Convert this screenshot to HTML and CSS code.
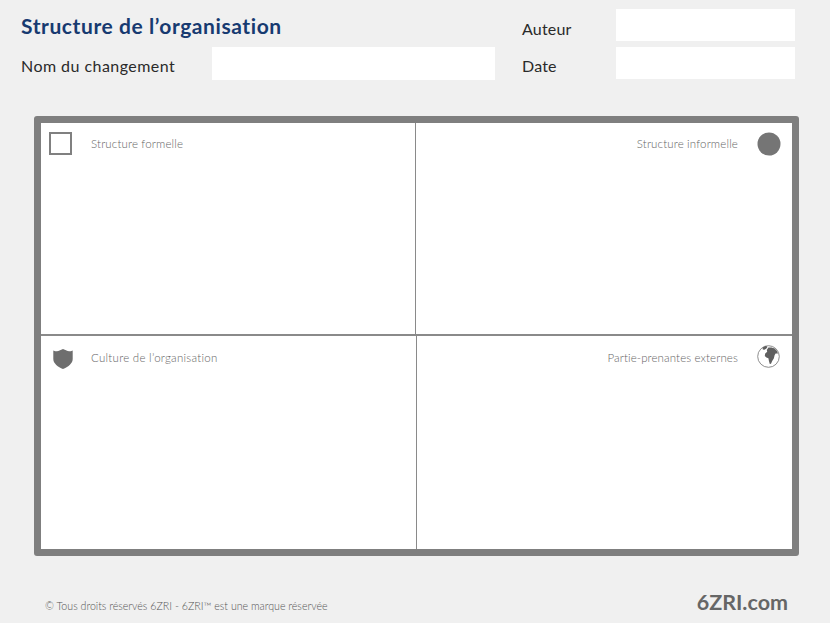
FILE: index.html
```html
<!DOCTYPE html>
<html lang="fr">
<head>
<meta charset="utf-8">
<title>Structure de l’organisation</title>
<link rel="stylesheet" href="styles.css">
</head>
<body>
<header class="head">
  <h1 class="title">Structure de l’organisation</h1>
  <span class="label auteur">Auteur</span>
  <div class="field f-auteur"></div>
  <span class="label nom">Nom du changement</span>
  <div class="field f-nom"></div>
  <span class="label date">Date</span>
  <div class="field f-date"></div>
</header>
<main class="board">
  <section class="row row-top">
    <div class="cell cell-left">
      <svg class="icon" width="23" height="23" viewBox="0 0 23 23"><rect x="1" y="1" width="21" height="21" fill="none" stroke="#808080" stroke-width="2"/></svg>
      <span class="cell-label formelle">Structure formelle</span>
    </div>
    <div class="cell cell-right">
      <span class="cell-label informelle">Structure informelle</span>
      <svg class="icon" width="24" height="24" viewBox="0 0 24 24"><circle cx="12" cy="12" r="11.5" fill="#757575"/></svg>
    </div>
  </section>
  <section class="row row-bottom">
    <div class="cell cell-left">
      <svg class="icon shield" width="20" height="20" viewBox="0 0 20 20"><path d="M0.3 1.5 C3 2.6 5 2.6 6.5 1.6 L10 0 L13.5 1.6 C15 2.6 17 2.6 19.7 1.5 V10 C19.7 14.5 15 18 10 20 C5 18 0.3 14.5 0.3 10 Z" fill="#6e6e6e"/></svg>
      <span class="cell-label culture">Culture de l’organisation</span>
    </div>
    <div class="cell cell-right">
      <span class="cell-label">Partie-prenantes externes</span>
      <svg class="icon globe" width="23" height="23" viewBox="0 0 23 23">
        <circle cx="11.5" cy="11.5" r="10.8" fill="#fff" stroke="#808080" stroke-width="0.9"/>
        <path d="M5.6 2.4 L9 0.8 L10.4 2 L9.4 3.4 L7.4 4.8 L5.8 4.4 Z" fill="#5f5f5f"/>
        <path d="M11.4 2.6 L14.6 2.4 L17.6 3.6 L20 6 L21 8.6 L18.6 8.4 L17.6 10.2 L16.8 13.4 L15.2 16 L14 18.8 L12.8 19 L12 16.2 L11.4 13.2 L9.4 12.6 L7.8 11 L8.2 8.4 L10.2 6.8 L9.8 5 Z" fill="#5f5f5f"/>
      </svg>
    </div>
  </section>
</main>
<footer class="foot">
  <span class="copy">© Tous droits réservés 6ZRI - 6ZRI™ est une marque réservée</span>
  <span class="brand">6ZRI.com</span>
</footer>
</body>
</html>
```
FILE: styles.css
```css
* { box-sizing: border-box; }
html, body { margin: 0; padding: 0; }
body {
  width: 830px;
  height: 623px;
  overflow: hidden;
  background: #f0f0f0;
  font-family: Lato, "Open Sans", sans-serif;
}
.head {
  display: grid;
  grid-template-columns: 191px 283px 27px 94px 179px;
  grid-template-rows: 32px 33px;
  row-gap: 6px;
  padding: 9px 0 0 21px;
  align-items: center;
}
.title {
  grid-column: 1 / 4;
  margin: 0;
  font-size: 21px;
  font-weight: 700;
  color: #173a70;
  letter-spacing: 0.58px;
}
.label { font-size: 16px; color: #2a2a2a; letter-spacing: 0.45px; }
.auteur { grid-column: 4; grid-row: 1; position: relative; top: 3px; letter-spacing: 0.2px; }
.nom { grid-column: 1; grid-row: 2; position: relative; top: 2px; }
.date { grid-column: 4; grid-row: 2; position: relative; top: 2px; letter-spacing: 0.2px; }
.field { background: #fff; height: 100%; }
.f-auteur { grid-column: 5; grid-row: 1; }
.f-nom { grid-column: 2; grid-row: 2; }
.f-date { grid-column: 5; grid-row: 2; height: 32px; align-self: start; }
.board {
  margin: 36px 0 0 34px;
  width: 765px;
  height: 440px;
  border: 7px solid #7f7f7f;
  border-radius: 3px;
  background: #fff;
  display: flex;
  flex-direction: column;
}
.row { display: flex; }
.row-top { height: 213px; border-bottom: 2px solid #8a8a8a; }
.row-bottom { flex: 1; }
.cell { display: flex; align-items: flex-start; }
.cell-left { border-right: 1.5px solid #8a8a8a; }
.row-top .cell-left { width: 375px; }
.row-bottom .cell-left { width: 376px; }
.cell-right { flex: 1; justify-content: flex-end; }
.cell-label {
  font-size: 11.5px;
  font-weight: 300;
  color: #666;
  line-height: 14px;
  letter-spacing: 0.12px;
}
.formelle { letter-spacing: 0.16px; }
.informelle { letter-spacing: 0.16px; }
.culture { letter-spacing: 0.27px; }
.row-top .cell-left { padding: 9px 0 0 8px; }
.row-top .cell-left .cell-label { margin: 5px 0 0 19px; }
.row-top .cell-right { padding: 9px 11px 0 0; }
.row-top .cell-right .cell-label { margin: 5px 19px 0 0; }
.row-bottom .cell-left { padding: 13px 0 0 12px; }
.row-bottom .cell-left .cell-label { margin: 2px 0 0 18px; }
.row-bottom .cell-right { padding: 9px 12px 0 0; }
.row-bottom .cell-right .cell-label { margin: 6px 19px 0 0; }
.foot {
  display: flex;
  justify-content: space-between;
  align-items: center;
  padding: 33px 42px 0 45px;
}
.copy { font-size: 10.65px; font-weight: 300; color: #555; position: relative; top: 3px; }
.brand { font-size: 21.5px; font-weight: 700; color: #666; }
```
